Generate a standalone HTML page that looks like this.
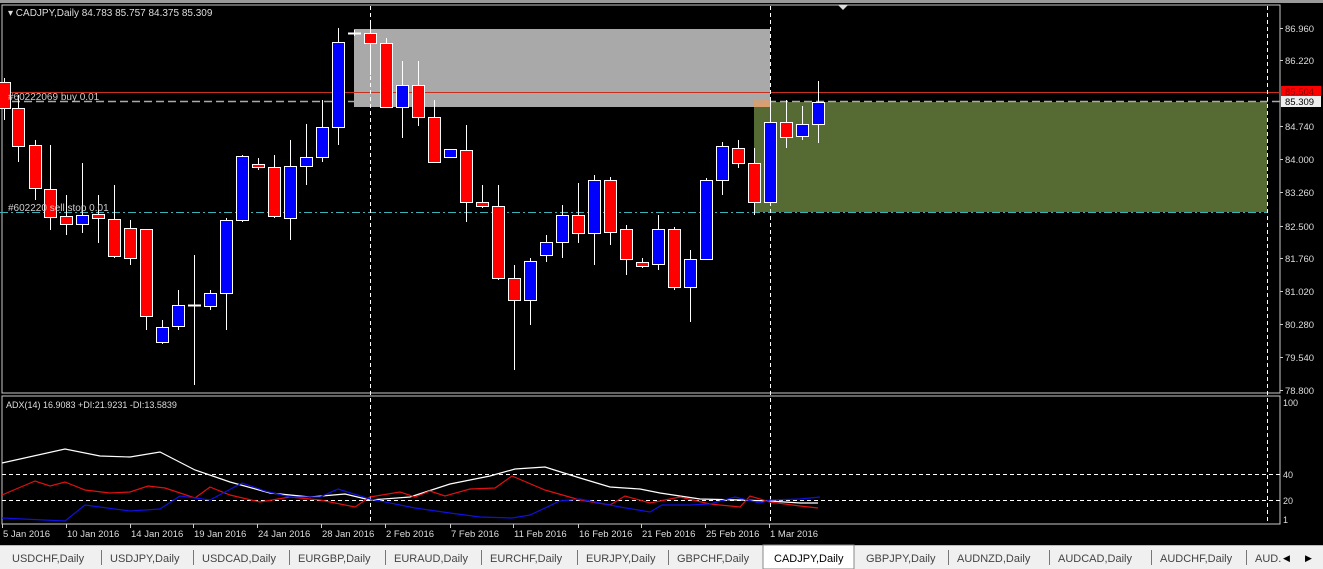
<!DOCTYPE html>
<html><head><meta charset="utf-8"><style>
html,body{margin:0;padding:0;background:#000;width:1323px;height:569px;overflow:hidden}
svg{display:block}
text{font-family:"Liberation Sans",sans-serif}
</style></head><body>
<svg id="s" width="1323" height="569" viewBox="0 0 1323 569" xmlns="http://www.w3.org/2000/svg">
<rect x="0" y="0" width="1323" height="569" fill="#000"/>
<rect x="0" y="0" width="1323" height="3" fill="#9a9a9a"/>
<rect x="2" y="5" width="1278" height="388" fill="none" stroke="#c8c8c8" stroke-width="1"/>
<rect x="2" y="396" width="1278" height="128" fill="none" stroke="#c8c8c8" stroke-width="1"/>
<rect x="354" y="29" width="416" height="78" fill="#a9a9a9"/>
<rect x="754" y="102" width="513" height="110" fill="#566a33"/>
<rect x="754" y="100" width="16" height="7" fill="#d8a070"/>
<line x1="0" y1="92.5" x2="1280" y2="92.5" stroke="#c8301e" stroke-width="1"/>
<line x1="0" y1="101.5" x2="1280" y2="101.5" stroke="#aaa" stroke-dasharray="8,4" stroke-width="1.5"/>
<line x1="0" y1="212.5" x2="1267" y2="212.5" stroke="#3cb0b8" stroke-dasharray="8,3,2,3"/>
<line x1="370.5" y1="6" x2="370.5" y2="524" stroke="#fff" stroke-dasharray="4,3"/>
<line x1="770.5" y1="6" x2="770.5" y2="524" stroke="#fff" stroke-dasharray="4,3"/>
<line x1="1267.5" y1="6" x2="1267.5" y2="524" stroke="#fff" stroke-dasharray="4,3"/>
<line x1="2" y1="474.5" x2="1280" y2="474.5" stroke="#fff" stroke-dasharray="4,3"/>
<line x1="2" y1="500.5" x2="1280" y2="500.5" stroke="#fff" stroke-dasharray="4,3"/>
<polygon points="838,5 848,5 843,10" fill="#ddd"/>
<g id="c"></g>
<g id="a"></g>
<text x="8" y="16" font-size="10" fill="#ddd">▾ CADJPY,Daily  84.783 85.757 84.375 85.309</text>
<text x="8" y="100" font-size="10" fill="#ccc">#60222069 buy 0.01</text>
<text x="8" y="211" font-size="10" fill="#ccc">#602220   sell stop 0.01</text>
<text x="6" y="408" font-size="9" fill="#ddd">ADX(14) 16.9083 +DI:21.9231 -DI:13.5839</text>
<g font-size="9.5" fill="#ddd" id="px"></g>
<rect x="1281" y="86" width="40" height="11" fill="#f00"/>
<text x="1285" y="95" font-size="9.5" fill="#800">85.504</text>
<rect x="1281" y="96" width="40" height="11" fill="#eee"/>
<text x="1285" y="105" font-size="9.5" fill="#000">85.309</text>
<g font-size="9" fill="#ddd">
<text x="1283" y="406">100</text><text x="1283" y="478">40</text><text x="1283" y="504">20</text><text x="1283" y="523">1</text>
</g>
<g font-size="9.5" fill="#ddd" id="dt"></g>
<rect x="0" y="545" width="1323" height="24" fill="#f0f0f0"/>
<line x1="0" y1="545.5" x2="1323" y2="545.5" stroke="#bbb"/>
<g id="tb" font-size="11" fill="#444"></g>
</svg>
<script>
var NS="http://www.w3.org/2000/svg";
function el(p,n,a,t){var e=document.createElementNS(NS,n);for(var k in a)e.setAttribute(k,a[k]);if(t)e.textContent=t;document.getElementById(p).appendChild(e);return e;}
var C=[[4,82,108,78,120,'r'],[18,108,146,95,162,'r'],[35,145,188,140,200,'r'],[50,189,217,145,230,'r'],[66,216,224,195,235,'r'],[82,215,224,163,233,'b'],[98,214,218,195,243,'r'],[114,219,256,185,258,'r'],[130,228,258,220,265,'r'],[146,229,316,229,330,'r'],[162,327,342,320,344,'b'],[178,305,326,290,330,'b'],[194,305,306,255,385,'w'],[210,293,306,290,310,'b'],[226,220,293,218,330,'b'],[242,156,220,155,222,'b'],[258,164,167,158,170,'r'],[274,167,216,155,218,'r'],[290,166,218,140,240,'b'],[306,157,166,124,185,'b'],[322,127,157,100,162,'b'],[338,42,127,28,145,'b'],[354,33,34,30,36,'w'],[370,33,43,22,75,'r'],[386,43,107,38,107,'r'],[402,85,107,61,138,'b'],[418,85,117,61,126,'r'],[434,117,162,100,162,'r'],[450,149,157,149,157,'b'],[466,150,202,125,222,'r'],[482,202,206,185,208,'r'],[498,206,278,185,280,'r'],[514,278,300,265,370,'r'],[530,261,300,258,325,'b'],[546,242,255,235,262,'b'],[562,215,242,205,258,'b'],[578,215,233,183,243,'r'],[594,180,233,175,265,'b'],[610,180,232,177,245,'r'],[626,229,259,225,275,'r'],[642,262,266,258,268,'r'],[658,229,264,215,270,'b'],[674,229,287,227,290,'r'],[690,259,287,250,322,'b'],[706,180,259,178,260,'b'],[722,146,180,142,195,'b'],[738,148,163,140,168,'r'],[754,163,202,148,215,'r'],[770,122,202,100,202,'b'],[786,122,137,100,148,'r'],[802,124,136,106,140,'b'],[818,102,124,81,143,'b']];
C.forEach(function(c){var x=c[0];el('c','line',{x1:x+.5,y1:c[3],x2:x+.5,y2:c[4],stroke:'#fff'});
if(c[5]=='w'){el('c','line',{x1:x-6,y1:c[1]+.5,x2:x+7,y2:c[1]+.5,stroke:'#fff',"stroke-width":2});return;}
el('c','rect',{x:x-5.5,y:c[1]+.5,width:12,height:Math.max(2,c[2]-c[1]),fill:c[5]=='r'?'#f00':'#00f',stroke:'#fff'});});
function pl(p,col){el('a','polyline',{points:p,fill:'none',stroke:col,"stroke-width":1.2});}
pl("2,463 65,449 100,456 130,457 160,452 195,470 230,482 270,493 310,497 345,494 370,500 410,497 450,484 490,476 515,469 545,467 580,478 610,487 640,489 660,493 700,499 740,500 770,501 800,503 818,503","#fff");
pl("2,495 35,481 50,486 65,482 85,490 110,493 130,492 148,486 165,488 195,498 210,487 230,495 260,502 290,497 320,500 355,507 370,497 400,492 415,497 430,491 445,496 470,489 495,488 512,476 545,490 580,500 610,505 625,496 650,503 680,497 710,504 740,507 750,496 770,502 800,506 818,508","#e01010");
pl("2,518 65,521 85,505 130,511 160,509 180,496 210,500 242,483 265,491 290,497 320,497 338,489 370,499 415,508 450,513 480,517 512,518 530,515 560,501 580,499 620,507 650,512 662,505 690,505 710,504 735,497 760,503 770,500 800,499 820,497","#1010e0");
[["86.960",28],["86.220",60],["84.740",126],["84.000",159],["83.260",192],["82.500",226],["81.760",258],["81.020",291],["80.280",324],["79.540",357],["78.800",390]].forEach(function(p){el('px','text',{x:1285,y:p[1]+4},p[0]);el('px','line',{x1:1280,y1:p[1]+.5,x2:1283,y2:p[1]+.5,stroke:'#ccc'});});
[["5 Jan 2016",2],["10 Jan 2016",66],["14 Jan 2016",130],["19 Jan 2016",193],["24 Jan 2016",257],["28 Jan 2016",321],["2 Feb 2016",385],["7 Feb 2016",450],["11 Feb 2016",513],["16 Feb 2016",578],["21 Feb 2016",641],["25 Feb 2016",705],["1 Mar 2016",769]].forEach(function(d){el('dt','text',{x:d[1]+1,y:537},d[0]);el('dt','line',{x1:d[1]+.5,y1:524,x2:d[1]+.5,y2:528,stroke:'#ccc'});});
var T=[["USDCHF,Daily",12],["USDJPY,Daily",110],["USDCAD,Daily",202],["EURGBP,Daily",298],["EURAUD,Daily",394],["EURCHF,Daily",490],["EURJPY,Daily",586],["GBPCHF,Daily",677],["CADJPY,Daily",774],["GBPJPY,Daily",866],["AUDNZD,Daily",957],["AUDCAD,Daily",1058],["AUDCHF,Daily",1160],["AUD.",1255]];
el('tb','rect',{x:763,y:545,width:91,height:24,fill:'#fff',stroke:'#888'});
T.forEach(function(t,i){el('tb','text',{x:t[1],y:562,fill:i==8?'#000':'#444'},t[0]);if(i>0&&i!=8&&i!=9)el('tb','line',{x1:t[1]-8.5,y1:550,x2:t[1]-8.5,y2:565,stroke:'#777'});});
el('tb','text',{x:1283,y:561,"font-size":9,fill:'#000'},"◀");el('tb','text',{x:1305,y:561,"font-size":9,fill:'#000'},"▶");
</script>
</body></html>
